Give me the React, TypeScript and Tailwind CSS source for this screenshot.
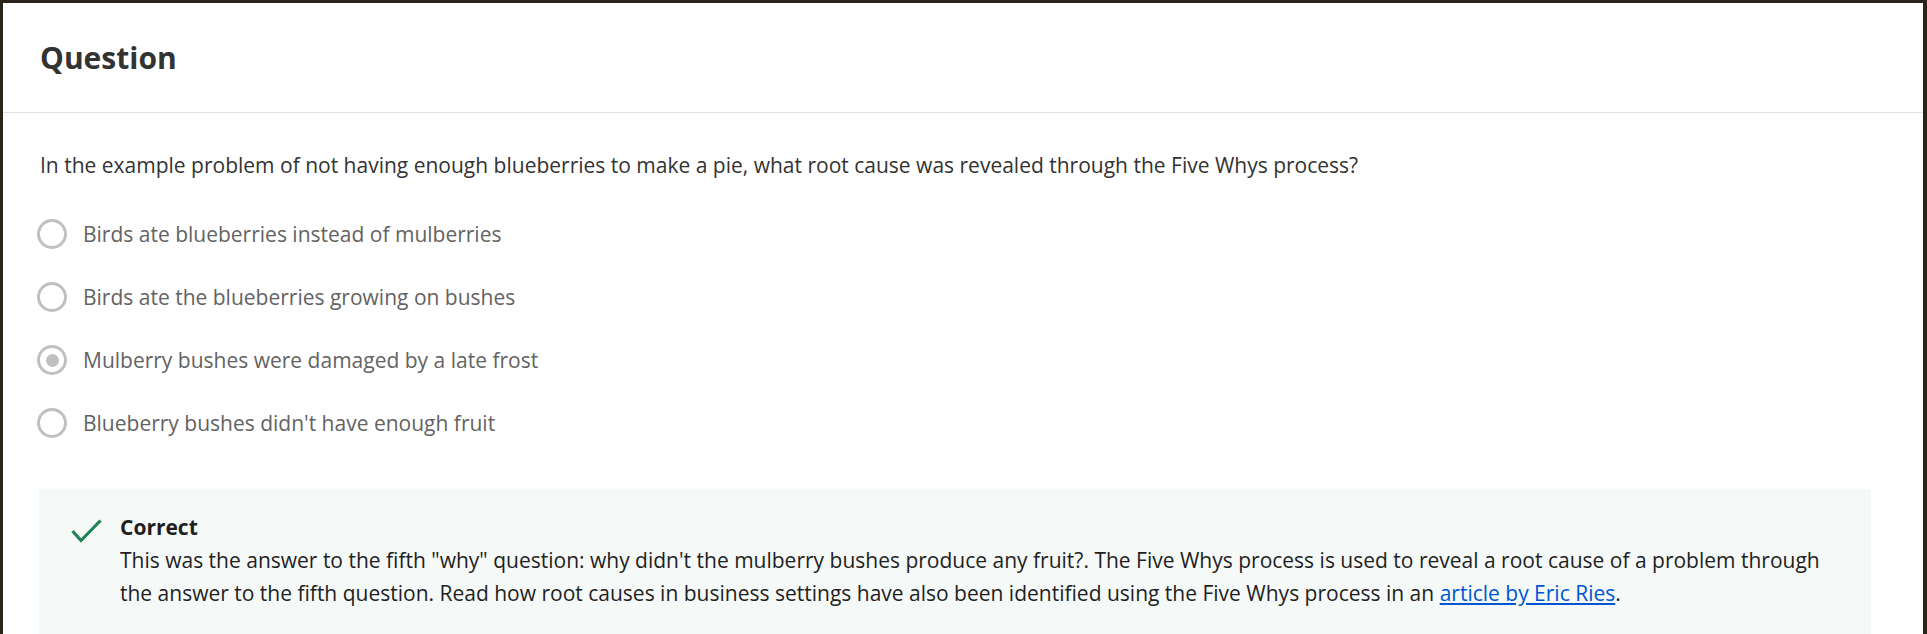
import React from 'react';

const options = [
  'Birds ate blueberries instead of mulberries',
  'Birds ate the blueberries growing on bushes',
  'Mulberry bushes were damaged by a late frost',
  "Blueberry bushes didn't have enough fruit",
];

const Radio: React.FC<{ checked?: boolean }> = ({ checked }) => (
  <span className="w-[30px] h-[30px] -ml-[3px] shrink-0 rounded-full border-[3px] border-[#c0c0c0] flex items-center justify-center">
    {checked && <span className="w-[13px] h-[13px] rounded-full bg-[#c0c0c0]"></span>}
  </span>
);

const App: React.FC = () => {
  return (
    <div className="w-full h-[634px] overflow-hidden bg-[#2a231a] pt-[3px] pl-[3px] pr-[4px] font-['Open_Sans',sans-serif]">
      <div className="bg-white h-full">
        {/* Header */}
        <div className="h-[110px] border-b border-[#e1e1e1] flex items-center px-[37px]">
          <h2 className="text-[30px] font-bold text-[#333] leading-none">Question</h2>
        </div>

        {/* Body */}
        <div className="pt-[37px] px-[37px]">
          <p className="text-[21px] leading-[30px] text-[#333]">
            In the example problem of not having enough blueberries to make a pie, what root cause was revealed through the Five Whys process?
          </p>

          <div className="mt-[39px] flex flex-col gap-[33px]">
            {options.map((opt, i) => (
              <label key={i} className="flex items-center gap-[16px] h-[30px]">
                <Radio checked={i === 2} />
                <span className="text-[21px] leading-[30px] text-[#636363]">{opt}</span>
              </label>
            ))}
          </div>
        </div>

        {/* Feedback */}
        <div className="mt-[51px] ml-[36px] mr-[52px] bg-[#f5f9f8] pt-[22px] pb-[24px] pl-[32px] pr-[31px] flex gap-[18px]">
          <svg width="31" height="24" viewBox="0 0 31 24" className="mt-[8px] shrink-0" fill="none">
            <polyline points="1.5,12 10,21.5 29.5,1.5" stroke="#1f8354" strokeWidth="3.2" />
          </svg>
          <div className="text-[21px] leading-[33px] text-[#1f1f1f]">
            <div className="font-bold">Correct</div>
            <p>
              This was the answer to the fifth "why" question: why didn't the mulberry bushes produce any fruit?. The Five Whys process is used to reveal a root cause of a problem through the answer to the fifth question. Read how root causes in business settings have also been identified using the Five Whys process in an{' '}
              <a href="#" className="text-[#0056d2] underline">article by Eric Ries</a>.
            </p>
          </div>
        </div>
      </div>
    </div>
  );
};

export default App;
